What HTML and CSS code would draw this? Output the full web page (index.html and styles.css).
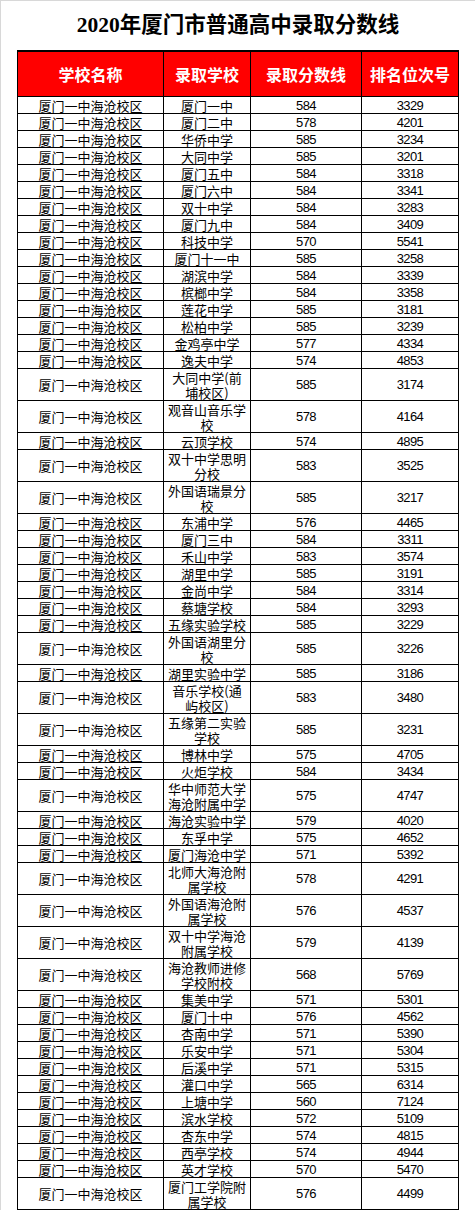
FILE: index.html
```html
<!DOCTYPE html>
<html lang="zh-CN">
<head>
<meta charset="utf-8">
<title>2020年厦门市普通高中录取分数线</title>
<link rel="stylesheet" href="styles.css">
</head>
<body>
<div class="page">
  <h1 class="title">2020年厦门市普通高中录取分数线</h1>
  <div class="table">
    <div class="row head">
      <div class="cell">学校名称</div>
      <div class="cell">录取学校</div>
      <div class="cell">录取分数线</div>
      <div class="cell">排名位次号</div>
    </div>
    <div class="row"><div class="cell">厦门一中海沧校区</div><div class="cell">厦门一中</div><div class="cell num">584</div><div class="cell num">3329</div></div>
    <div class="row"><div class="cell">厦门一中海沧校区</div><div class="cell">厦门二中</div><div class="cell num">578</div><div class="cell num">4201</div></div>
    <div class="row"><div class="cell">厦门一中海沧校区</div><div class="cell">华侨中学</div><div class="cell num">585</div><div class="cell num">3234</div></div>
    <div class="row"><div class="cell">厦门一中海沧校区</div><div class="cell">大同中学</div><div class="cell num">585</div><div class="cell num">3201</div></div>
    <div class="row"><div class="cell">厦门一中海沧校区</div><div class="cell">厦门五中</div><div class="cell num">584</div><div class="cell num">3318</div></div>
    <div class="row"><div class="cell">厦门一中海沧校区</div><div class="cell">厦门六中</div><div class="cell num">584</div><div class="cell num">3341</div></div>
    <div class="row"><div class="cell">厦门一中海沧校区</div><div class="cell">双十中学</div><div class="cell num">584</div><div class="cell num">3283</div></div>
    <div class="row"><div class="cell">厦门一中海沧校区</div><div class="cell">厦门九中</div><div class="cell num">584</div><div class="cell num">3409</div></div>
    <div class="row"><div class="cell">厦门一中海沧校区</div><div class="cell">科技中学</div><div class="cell num">570</div><div class="cell num">5541</div></div>
    <div class="row"><div class="cell">厦门一中海沧校区</div><div class="cell">厦门十一中</div><div class="cell num">585</div><div class="cell num">3258</div></div>
    <div class="row"><div class="cell">厦门一中海沧校区</div><div class="cell">湖滨中学</div><div class="cell num">584</div><div class="cell num">3339</div></div>
    <div class="row"><div class="cell">厦门一中海沧校区</div><div class="cell">槟榔中学</div><div class="cell num">584</div><div class="cell num">3358</div></div>
    <div class="row"><div class="cell">厦门一中海沧校区</div><div class="cell">莲花中学</div><div class="cell num">585</div><div class="cell num">3181</div></div>
    <div class="row"><div class="cell">厦门一中海沧校区</div><div class="cell">松柏中学</div><div class="cell num">585</div><div class="cell num">3239</div></div>
    <div class="row"><div class="cell">厦门一中海沧校区</div><div class="cell">金鸡亭中学</div><div class="cell num">577</div><div class="cell num">4334</div></div>
    <div class="row"><div class="cell">厦门一中海沧校区</div><div class="cell">逸夫中学</div><div class="cell num">574</div><div class="cell num">4853</div></div>
    <div class="row tall"><div class="cell">厦门一中海沧校区</div><div class="cell">大同中学(前埔校区)</div><div class="cell num">585</div><div class="cell num">3174</div></div>
    <div class="row tall"><div class="cell">厦门一中海沧校区</div><div class="cell">观音山音乐学校</div><div class="cell num">578</div><div class="cell num">4164</div></div>
    <div class="row"><div class="cell">厦门一中海沧校区</div><div class="cell">云顶学校</div><div class="cell num">574</div><div class="cell num">4895</div></div>
    <div class="row tall"><div class="cell">厦门一中海沧校区</div><div class="cell">双十中学思明分校</div><div class="cell num">583</div><div class="cell num">3525</div></div>
    <div class="row tall"><div class="cell">厦门一中海沧校区</div><div class="cell">外国语瑞景分校</div><div class="cell num">585</div><div class="cell num">3217</div></div>
    <div class="row"><div class="cell">厦门一中海沧校区</div><div class="cell">东浦中学</div><div class="cell num">576</div><div class="cell num">4465</div></div>
    <div class="row"><div class="cell">厦门一中海沧校区</div><div class="cell">厦门三中</div><div class="cell num">584</div><div class="cell num">3311</div></div>
    <div class="row"><div class="cell">厦门一中海沧校区</div><div class="cell">禾山中学</div><div class="cell num">583</div><div class="cell num">3574</div></div>
    <div class="row"><div class="cell">厦门一中海沧校区</div><div class="cell">湖里中学</div><div class="cell num">585</div><div class="cell num">3191</div></div>
    <div class="row"><div class="cell">厦门一中海沧校区</div><div class="cell">金尚中学</div><div class="cell num">584</div><div class="cell num">3314</div></div>
    <div class="row"><div class="cell">厦门一中海沧校区</div><div class="cell">蔡塘学校</div><div class="cell num">584</div><div class="cell num">3293</div></div>
    <div class="row"><div class="cell">厦门一中海沧校区</div><div class="cell">五缘实验学校</div><div class="cell num">585</div><div class="cell num">3229</div></div>
    <div class="row tall"><div class="cell">厦门一中海沧校区</div><div class="cell">外国语湖里分校</div><div class="cell num">585</div><div class="cell num">3226</div></div>
    <div class="row"><div class="cell">厦门一中海沧校区</div><div class="cell">湖里实验中学</div><div class="cell num">585</div><div class="cell num">3186</div></div>
    <div class="row tall"><div class="cell">厦门一中海沧校区</div><div class="cell">音乐学校(通屿校区)</div><div class="cell num">583</div><div class="cell num">3480</div></div>
    <div class="row tall"><div class="cell">厦门一中海沧校区</div><div class="cell">五缘第二实验学校</div><div class="cell num">585</div><div class="cell num">3231</div></div>
    <div class="row"><div class="cell">厦门一中海沧校区</div><div class="cell">博林中学</div><div class="cell num">575</div><div class="cell num">4705</div></div>
    <div class="row"><div class="cell">厦门一中海沧校区</div><div class="cell">火炬学校</div><div class="cell num">584</div><div class="cell num">3434</div></div>
    <div class="row tall"><div class="cell">厦门一中海沧校区</div><div class="cell">华中师范大学海沧附属中学</div><div class="cell num">575</div><div class="cell num">4747</div></div>
    <div class="row"><div class="cell">厦门一中海沧校区</div><div class="cell">海沧实验中学</div><div class="cell num">579</div><div class="cell num">4020</div></div>
    <div class="row"><div class="cell">厦门一中海沧校区</div><div class="cell">东孚中学</div><div class="cell num">575</div><div class="cell num">4652</div></div>
    <div class="row"><div class="cell">厦门一中海沧校区</div><div class="cell">厦门海沧中学</div><div class="cell num">571</div><div class="cell num">5392</div></div>
    <div class="row tall"><div class="cell">厦门一中海沧校区</div><div class="cell">北师大海沧附属学校</div><div class="cell num">578</div><div class="cell num">4291</div></div>
    <div class="row tall"><div class="cell">厦门一中海沧校区</div><div class="cell">外国语海沧附属学校</div><div class="cell num">576</div><div class="cell num">4537</div></div>
    <div class="row tall"><div class="cell">厦门一中海沧校区</div><div class="cell">双十中学海沧附属学校</div><div class="cell num">579</div><div class="cell num">4139</div></div>
    <div class="row tall"><div class="cell">厦门一中海沧校区</div><div class="cell">海沧教师进修学校附校</div><div class="cell num">568</div><div class="cell num">5769</div></div>
    <div class="row"><div class="cell">厦门一中海沧校区</div><div class="cell">集美中学</div><div class="cell num">571</div><div class="cell num">5301</div></div>
    <div class="row"><div class="cell">厦门一中海沧校区</div><div class="cell">厦门十中</div><div class="cell num">576</div><div class="cell num">4562</div></div>
    <div class="row"><div class="cell">厦门一中海沧校区</div><div class="cell">杏南中学</div><div class="cell num">571</div><div class="cell num">5390</div></div>
    <div class="row"><div class="cell">厦门一中海沧校区</div><div class="cell">乐安中学</div><div class="cell num">571</div><div class="cell num">5304</div></div>
    <div class="row"><div class="cell">厦门一中海沧校区</div><div class="cell">后溪中学</div><div class="cell num">571</div><div class="cell num">5315</div></div>
    <div class="row"><div class="cell">厦门一中海沧校区</div><div class="cell">灌口中学</div><div class="cell num">565</div><div class="cell num">6314</div></div>
    <div class="row"><div class="cell">厦门一中海沧校区</div><div class="cell">上塘中学</div><div class="cell num">560</div><div class="cell num">7124</div></div>
    <div class="row"><div class="cell">厦门一中海沧校区</div><div class="cell">滨水学校</div><div class="cell num">572</div><div class="cell num">5109</div></div>
    <div class="row"><div class="cell">厦门一中海沧校区</div><div class="cell">杏东中学</div><div class="cell num">574</div><div class="cell num">4815</div></div>
    <div class="row"><div class="cell">厦门一中海沧校区</div><div class="cell">西亭学校</div><div class="cell num">574</div><div class="cell num">4944</div></div>
    <div class="row"><div class="cell">厦门一中海沧校区</div><div class="cell">英才学校</div><div class="cell num">570</div><div class="cell num">5470</div></div>
    <div class="row tall"><div class="cell">厦门一中海沧校区</div><div class="cell">厦门工学院附属学校</div><div class="cell num">576</div><div class="cell num">4499</div></div>
  </div>
</div>
</body>
</html>
```

FILE: styles.css
```css
html, body {
  margin: 0;
  padding: 0;
  background: #ffffff;
}

.page {
  width: 474px;
  height: 1209px;
  border-top: 1px solid #d8d8d8;
  border-left: 1px solid #d8d8d8;
  overflow: hidden;
  font-family: "Noto Sans CJK SC", sans-serif;
  color: #000000;
}

.title {
  margin: 0;
  height: 49px;
  line-height: 49px;
  text-align: center;
  font-family: "Liberation Serif", "Noto Sans CJK SC", serif;
  font-weight: bold;
  font-size: 21.5px;
  color: #000000;
}

.table {
  margin-left: 16px;
  width: 442px;
  box-sizing: border-box;
  background: #000000;
  padding: 2px 1px 1px 1px;
  display: flex;
  flex-direction: column;
  gap: 1px;
}

.row {
  display: grid;
  grid-template-columns: 145px 86px 110px 96px;
  gap: 1px;
  height: 16px;
}

.row.tall {
  height: 31px;
}

.row.head {
  height: 44px;
}

.cell {
  background: #ffffff;
  display: flex;
  align-items: center;
  justify-content: center;
  text-align: center;
  font-size: 13px;
  line-height: 15px;
  padding: 0 2px;
  overflow: hidden;
}

.row.tall .cell {
  line-height: 15px;
}

.head .cell {
  background: #ff0000;
  color: #ffffff;
  font-weight: bold;
  font-size: 16px;
  line-height: 20px;
}

.num {
  font-family: "Liberation Sans", "DejaVu Sans", sans-serif;
  font-size: 13px;
  letter-spacing: -0.6px;
}
```
